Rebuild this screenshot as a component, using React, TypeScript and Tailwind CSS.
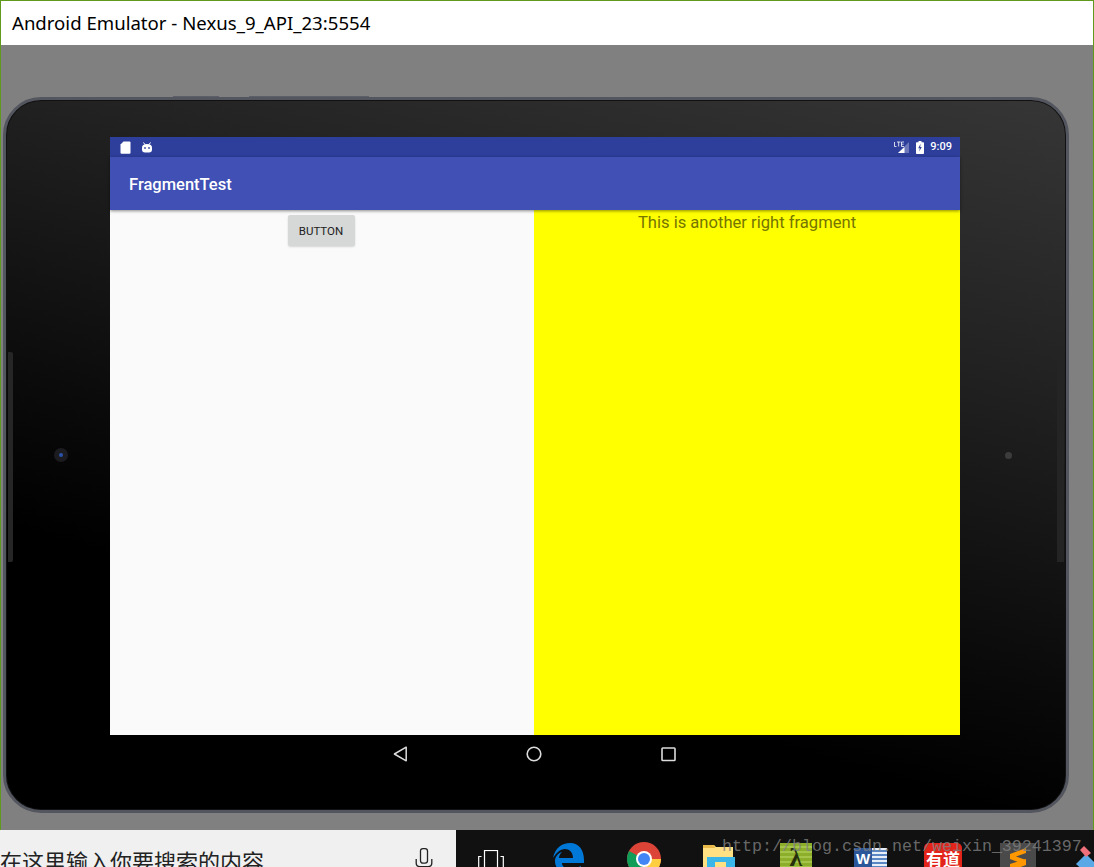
const roboto = { fontFamily: '"Roboto", sans-serif' };

const SdIcon = () => (
  <svg width="11" height="13" viewBox="0 0 11 13">
    <path d="M3.5 0.5H9.6Q10.5 0.5 10.5 1.5V11.7Q10.5 12.7 9.5 12.7H1.5Q0.5 12.7 0.5 11.7V3.6Z" fill="#fff" />
  </svg>
);

const RobotIcon = () => (
  <svg width="12" height="11" viewBox="0 0 12 11">
    <path d="M1 5.5Q1 2 6 2Q11 2 11 5.5V7.5Q11 10.5 8 10.5H4Q1 10.5 1 7.5Z" fill="#fff" />
    <path d="M2.5 0.5L4 2.6M9.5 0.5L8 2.6" stroke="#fff" strokeWidth="1" />
    <circle cx="4" cy="6" r="0.9" fill="#3a49a3" />
    <circle cx="8" cy="6" r="0.9" fill="#3a49a3" />
  </svg>
);

const SignalIcon = () => (
  <svg width="16" height="13" viewBox="0 0 16 13">
    <path d="M15 1V12H4Z" fill="#fff" fillOpacity="0.3" />
    <path d="M10.5 6V12H4Z" fill="#fff" />
    <path d="M0.5 1V5.5H2.5M3 1H6.5M4.7 1V5.5M7.5 5.5V1H10M7.5 3.2H9.6M7.5 5.5H10" stroke="#fff" strokeWidth="0.8" fill="none" />
  </svg>
);

const BatteryIcon = () => (
  <svg width="8" height="13" viewBox="0 0 8 13">
    <path d="M2.5 0H5.5V1.2H7.2Q8 1.2 8 2V12.2Q8 13 7.2 13H0.8Q0 13 0 12.2V2Q0 1.2 0.8 1.2H2.5Z" fill="#fff" />
    <path d="M4.6 2.8L2.2 7.2H3.8L3.2 10.6L5.8 6H4.2Z" fill="#33429c" />
  </svg>
);

const BackIcon = () => (
  <svg width="18" height="18" viewBox="0 0 18 18">
    <path d="M15.2 2.2V15.8L3.4 9Z" fill="none" stroke="#dcdcdc" strokeWidth="1.5" strokeLinejoin="round" />
  </svg>
);

const HomeIcon = () => (
  <svg width="18" height="18" viewBox="0 0 18 18">
    <circle cx="9" cy="9" r="6.8" fill="none" stroke="#dcdcdc" strokeWidth="1.6" />
  </svg>
);

const SquareIcon = () => (
  <svg width="18" height="18" viewBox="0 0 18 18">
    <rect x="3" y="3" width="13" height="12.5" rx="0.8" fill="none" stroke="#dcdcdc" strokeWidth="1.6" />
  </svg>
);

const MicIcon = () => (
  <svg width="18" height="22" viewBox="0 0 18 22" className="shrink-0">
    <rect x="5.5" y="0.7" width="7" height="14.5" rx="2.4" fill="none" stroke="#222" strokeWidth="1.3" />
    <path d="M1.2 11V15Q1.2 18.6 5 18.6H13Q16.8 18.6 16.8 15V11" fill="none" stroke="#222" strokeWidth="1.3" />
  </svg>
);

const TaskViewIcon = () => (
  <svg width="26" height="26" viewBox="0 0 26 26">
    <rect x="6.5" y="0.5" width="13" height="25" fill="none" stroke="#fff" strokeWidth="1.2" />
    <path d="M3.5 6.5H0.7V22H3.5M22.5 6.5H25.3V22H22.5" fill="none" stroke="#fff" strokeWidth="1.2" />
  </svg>
);

const EdgeIcon = () => (
  <svg width="32" height="30" viewBox="0 0 32 30">
    <path d="M1 15C3 5 10 0 18 0C27 0 32 7 32 17V20H10C10 26 19 28 29 23V29C16 34 3 29 3 18C3 14 6 10 10 9C8 11 7 13 7 15H21C21 9 17 6 13 6C8 6 4 10 1 15Z" fill="#0078d7" />
  </svg>
);

const ChromeIcon = () => (
  <svg width="34" height="34" viewBox="0 0 34 34">
    <circle cx="17" cy="17" r="17" fill="#db4437" />
    <path d="M17 17L2 9A17 17 0 0 0 17 34Z" fill="#0f9d58" />
    <path d="M17 17H34A17 17 0 0 1 17 34Z" fill="#ffcd40" />
    <circle cx="17" cy="17" r="8" fill="#fff" />
    <circle cx="17" cy="17" r="6" fill="#4285f4" />
  </svg>
);

const FilesIcon = () => (
  <svg width="32" height="30" viewBox="0 0 32 30">
    <path d="M0 1H11L13 3H30V30H0Z" fill="#ffe083" />
    <path d="M0 1H11L12 4H0Z" fill="#e9b949" />
    <rect x="4" y="13" width="28" height="17" fill="#3ab6e8" />
    <rect x="12" y="18" width="11" height="12" fill="#ffe083" />
  </svg>
);

const LambdaIcon = () => (
  <div className="relative flex h-[30px] w-[32px] justify-center overflow-hidden bg-[#8cae2a] bg-[repeating-linear-gradient(180deg,#8cae2a_0,#8cae2a_3px,#a5c44a_3px,#a5c44a_5px)]">
    <span className="text-[26px] leading-[30px] font-bold text-[#26300c]" style={{ fontFamily: '"Liberation Serif", serif' }}>λ</span>
  </div>
);

const WordIcon = () => (
  <div className="relative flex h-[26px] w-[33px] items-start justify-end bg-[#2b579a]">
    <span className="absolute top-[2px] left-[2px] text-[15px] leading-[18px] font-bold text-white" style={{ fontFamily: '"Liberation Sans", sans-serif' }}>W</span>
    <div className="h-[26px] w-[15px] bg-[#e8eef8] bg-[repeating-linear-gradient(180deg,#e8eef8_0,#e8eef8_2px,#5b86c4_2px,#5b86c4_4px)]" />
  </div>
);

const YoudaoIcon = () => (
  <div className="flex h-[30px] w-[38px] items-center justify-center overflow-hidden rounded-[5px] bg-[#e3241b] text-[17px] leading-none font-bold text-white" style={{ fontFamily: '"Noto Sans CJK SC", sans-serif' }}>
    有道
  </div>
);

const SublimeIcon = () => (
  <div className="flex h-[30px] w-[36px] justify-center bg-[#4a4a4a]">
    <svg width="20" height="30" viewBox="0 0 20 30">
      <path d="M18 5L2 11V16L18 22V17L8 13.5L18 10Z" fill="#ff9800" />
      <path d="M2 21L18 16V22L2 28Z" fill="#ff9800" />
    </svg>
  </div>
);

const DiamondIcon = () => (
  <svg width="22" height="28" viewBox="0 0 22 28">
    <path d="M11 8L22 19L12 28L1 18Z" fill="#5aa9e6" />
    <path d="M9 0L16 7L11 11L5 4Z" fill="#ef6f7a" />
  </svg>
);

export default function App() {
  return (
    <div className="relative flex h-[867px] w-[1094px] flex-col overflow-hidden bg-[#808080]">
      <div className="flex h-[830px] shrink-0 flex-col border-x border-t border-[#5f9a1f]">
        {/* window title */}
        <div className="flex h-[44px] shrink-0 items-center bg-white pl-[11px] text-[18.6px] text-black" style={{ fontFamily: '"Noto Sans", sans-serif' }}>
          Android Emulator - Nexus_9_API_23:5554
        </div>

        <div className="flex-1 bg-[#808080] pt-[52px] pl-[2px]">
          {/* tablet frame */}
          <div className="relative h-[716px] w-[1066px] rounded-[38px] border-[3px] border-[#54565f] bg-[linear-gradient(196deg,#363636_0%,#222_28%,#0a0a0a_58%,#000_72%)] pt-[37px] pl-[104px] shadow-[inset_0_0_0_1px_#111]">
            <div className="absolute -top-[4px] left-[167px] h-[1px] w-[46px] bg-[#5d5f68]" />
            <div className="absolute -top-[4px] left-[243px] h-[1px] w-[120px] bg-[#5d5f68]" />
            <div className="absolute top-[252px] left-[2px] h-[210px] w-[5px] rounded-r-[2px] bg-[#0a0a0a] bg-[radial-gradient(#262626_1px,transparent_1px)] bg-[length:2px_2px]" />
            <div className="absolute top-[252px] right-[2px] h-[210px] w-[7px] bg-[#090909] bg-[radial-gradient(#242424_1px,transparent_1px)] bg-[length:2px_2px]" />
            <div className="absolute top-[348px] left-[48px] flex h-[14px] w-[14px] items-center justify-center rounded-full bg-[#1c1c20]">
              <div className="h-[4px] w-[4px] rounded-full bg-[#2a52a8]" />
            </div>
            <div className="absolute top-[352px] left-[999px] h-[7px] w-[7px] rounded-full bg-[#3c3c3c]" />

            {/* android screen */}
            <div className="w-[850px]">
              <div className="flex h-[20px] items-center justify-between bg-[#2d3e9b] pr-[8px] pl-[10px]">
                <div className="flex items-center gap-[10px]">
                  <SdIcon />
                  <RobotIcon />
                </div>
                <div className="flex items-center gap-[6px]">
                  <SignalIcon />
                  <BatteryIcon />
                  <span className="text-[11px] font-medium text-white" style={roboto}>9:09</span>
                </div>
              </div>
              <div className="relative z-10 flex h-[53px] items-center bg-[#4050b4] pt-[3px] pl-[19px] text-[16.5px] font-medium text-white shadow-[0_1px_3px_rgba(0,0,0,0.45)]" style={roboto}>
                FragmentTest
              </div>
              <div className="flex h-[525px]">
                <div className="flex w-[424px] justify-center bg-[#fafafa] pt-[5px] pr-[2px]">
                  <button className="h-[31px] w-[67px] rounded-[2px] bg-[#d6d7d7] pt-[2px] text-[11.5px] font-normal text-[#222] shadow-[0_1px_2px_rgba(0,0,0,0.15)]" style={roboto}>
                    BUTTON
                  </button>
                </div>
                <div className="flex-1 bg-[#ffff00] pt-[3px] text-center text-[16.6px] leading-[20px] text-[#757500]" style={roboto}>
                  This is another right fragment
                </div>
              </div>
              {/* nav keys */}
              <div className="flex h-[38px] items-center justify-center gap-[116px] pr-[2px]">
                <BackIcon />
                <HomeIcon />
                <SquareIcon />
              </div>
            </div>
          </div>
        </div>
      </div>

      {/* windows taskbar */}
      <div className="flex flex-1 overflow-hidden">
        <div className="flex h-[37px] w-[456px] shrink-0 items-start justify-between bg-[#f0f0f0] pt-[18px] pr-[23px]">
          <span className="-mt-[3px] text-[22px] leading-[30px] whitespace-nowrap text-[#222]" style={{ fontFamily: '"Noto Sans CJK SC", sans-serif' }}>
            在这里输入你要搜索的内容
          </span>
          <MicIcon />
        </div>
        <div className="flex h-[37px] flex-1 items-start overflow-hidden bg-[#111111] pt-[13px] pl-[22px]">
          <div className="mt-[7px] shrink-0"><TaskViewIcon /></div>
          <div className="ml-[48px] shrink-0"><EdgeIcon /></div>
          <div className="-mt-[1px] ml-[43px] shrink-0"><ChromeIcon /></div>
          <div className="mt-[1px] ml-[42px] shrink-0"><FilesIcon /></div>
          <div className="ml-[45px] shrink-0"><LambdaIcon /></div>
          <div className="mt-[5px] ml-[42px] shrink-0"><WordIcon /></div>
          <div className="ml-[37px] shrink-0"><YoudaoIcon /></div>
          <div className="ml-[38px] shrink-0"><SublimeIcon /></div>
          <div className="mt-[3px] ml-[39px] shrink-0"><DiamondIcon /></div>
        </div>
      </div>

      {/* blog watermark */}
      <div className="absolute top-[837px] left-[722px] text-[16.67px] leading-[20px] whitespace-nowrap text-[#808080]/80" style={{ fontFamily: '"Liberation Mono", monospace' }}>
        http://blog.csdn.net/weixin_39241397
      </div>
    </div>
  );
}
